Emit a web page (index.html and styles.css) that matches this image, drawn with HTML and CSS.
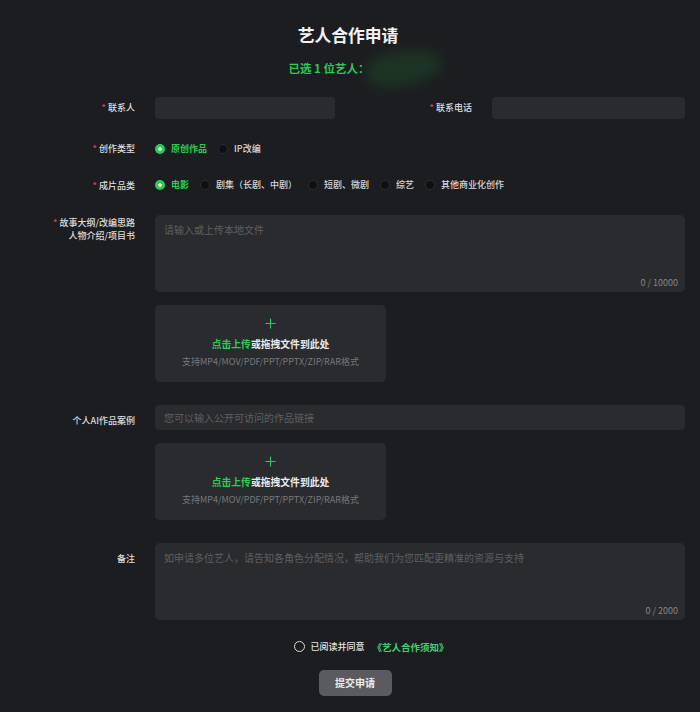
FILE: index.html
```html
<!DOCTYPE html>
<html lang="zh-CN">
<head>
    <meta charset="UTF-8">
    <meta name="viewport" content="width=device-width, initial-scale=1.0">
    <title>艺人合作申请</title>
    <link rel="stylesheet" href="styles.css">
</head>
<body>
    <div class="page">
        <div class="header">
            <h1>艺人合作申请</h1>
            <div class="selected">已选 1 位艺人：<span class="redacted"></span></div>
        </div>

        <div class="form">
            <div class="row row-double">
                <label class="label"><i>*</i> 联系人</label>
                <input class="input" type="text">
                <label class="label"><i>*</i> 联系电话</label>
                <input class="input" type="text">
            </div>

            <div class="row">
                <label class="label"><i>*</i> 创作类型</label>
                <div class="options">
                    <span class="option checked"><span class="radio"></span>原创作品</span>
                    <span class="option"><span class="radio"></span>IP改编</span>
                </div>
            </div>

            <div class="row">
                <label class="label"><i>*</i> 成片品类</label>
                <div class="options">
                    <span class="option checked"><span class="radio"></span>电影</span>
                    <span class="option"><span class="radio"></span>剧集（长剧、中剧）</span>
                    <span class="option"><span class="radio"></span>短剧、微剧</span>
                    <span class="option"><span class="radio"></span>综艺</span>
                    <span class="option"><span class="radio"></span>其他商业化创作</span>
                </div>
            </div>

            <div class="row">
                <label class="label label-top label-multi"><i>*</i> 故事大纲/改编思路<br>人物介绍/项目书</label>
                <div class="stack">
                    <div class="textarea-wrap">
                        <textarea class="textarea" placeholder="请输入或上传本地文件"></textarea>
                        <span class="counter">0 / 10000</span>
                    </div>
                    <div class="upload">
                        <svg class="plus" width="11" height="11" viewBox="0 0 11 11"><path d="M5.5 0.5v10M0.5 5.5h10" stroke="#2bcc55" stroke-width="1.1" fill="none"/></svg>
                        <div class="upload-title"><span class="green">点击上传</span>或拖拽文件到此处</div>
                        <div class="upload-hint">支持MP4/MOV/PDF/PPT/PPTX/ZIP/RAR格式</div>
                    </div>
                </div>
            </div>

            <div class="row">
                <label class="label label-top">个人AI作品案例</label>
                <div class="stack">
                    <input class="input input-tall" type="text" placeholder="您可以输入公开可访问的作品链接">
                    <div class="upload">
                        <svg class="plus" width="11" height="11" viewBox="0 0 11 11"><path d="M5.5 0.5v10M0.5 5.5h10" stroke="#2bcc55" stroke-width="1.1" fill="none"/></svg>
                        <div class="upload-title"><span class="green">点击上传</span>或拖拽文件到此处</div>
                        <div class="upload-hint">支持MP4/MOV/PDF/PPT/PPTX/ZIP/RAR格式</div>
                    </div>
                </div>
            </div>

            <div class="row">
                <label class="label label-top">备注</label>
                <div class="textarea-wrap">
                    <textarea class="textarea" placeholder="如申请多位艺人，请告知各角色分配情况，帮助我们为您匹配更精准的资源与支持"></textarea>
                    <span class="counter">0 / 2000</span>
                </div>
            </div>
        </div>

        <div class="agree">
            <span class="circle"></span>
            <span>已阅读并同意</span>
            <a class="link">《艺人合作须知》</a>
        </div>

        <div class="actions">
            <button class="submit">提交申请</button>
        </div>
    </div>
</body>
</html>
```

FILE: styles.css
```css
:root { --bg: #1c1d20; --field: #2a2b2e; --fg: #d6d6d6; --muted: #5e5f62; --green: #2bcc55; --red: #e0454a; }

* {
    box-sizing: border-box;
    margin: 0;
    padding: 0;
}

body {
    background: var(--bg);
    color: var(--fg);
    font-family: "Noto Sans CJK SC", "Noto Sans", sans-serif;
}

.page {
    padding: 23px 15px 16px 0;
}

.header {
    padding-left: 11px;
}

h1 {
    font-size: 16.8px;
    line-height: 24px;
    font-weight: 700;
    color: #f2f2f2;
    text-align: center;
}

.selected {
    margin-top: 14px;
    font-size: 11.5px;
    line-height: 14px;
    font-weight: 700;
    color: var(--green);
    text-align: center;
    padding-left: 4px;
}

.redacted {
    position: relative;
    display: inline-block;
    width: 42px;
    height: 14px;
    vertical-align: middle;
}

.redacted::after {
    content: "";
    position: absolute;
    left: -4px;
    top: -12px;
    width: 76px;
    height: 34px;
    border-radius: 45% 55% 50% 40%;
    background: rgba(30, 70, 40, 0.55);
    filter: blur(6px);
    transform: rotate(-10deg);
}

.form {
    margin-top: 20px;
    display: flex;
    flex-direction: column;
    gap: 23px;
}

.row {
    display: grid;
    grid-template-columns: 135px 1fr;
    column-gap: 20px;
    align-items: center;
}

.row-double {
    grid-template-columns: 135px 180px 1fr 193px;
}

.label {
    font-size: 9px;
    line-height: 13px;
    font-weight: 500;
    color: #dcdcdc;
    text-align: right;
}

.label i {
    font-style: normal;
    color: var(--red);
}

.label-top {
    align-self: start;
    padding-top: 9px;
}

.label-multi {
    padding-top: 1px;
}

.input {
    width: 100%;
    height: 22px;
    border: none;
    border-radius: 4px;
    background: var(--field);
    outline: none;
    padding: 0 9px;
    font-family: inherit;
    font-size: 10px;
    color: var(--fg);
}

.input-tall {
    height: 25px;
}

.input::placeholder,
.textarea::placeholder {
    color: var(--muted);
}

.options {
    display: flex;
    align-items: center;
    gap: 11px;
    font-size: 9px;
    line-height: 13.5px;
    font-weight: 500;
    color: #d8d8d8;
}

.option {
    display: flex;
    align-items: center;
    gap: 6px;
}

.option.checked {
    color: var(--green);
    font-weight: 700;
}

.radio {
    width: 10px;
    height: 10px;
    border-radius: 50%;
    background: #0f1012;
    border: 1px solid #2c2d31;
}

.option.checked .radio {
    border: none;
    background: radial-gradient(circle, #fff 0 1.4px, var(--green) 2px);
}

.stack {
    display: flex;
    flex-direction: column;
    gap: 13px;
}

.textarea-wrap {
    position: relative;
}

.textarea {
    display: block;
    width: 100%;
    height: 77px;
    border: none;
    border-radius: 5px;
    background: var(--field);
    outline: none;
    resize: none;
    padding: 8px 9px;
    font-family: inherit;
    font-size: 10px;
    line-height: 14px;
    color: var(--fg);
}

.counter {
    position: absolute;
    right: 7px;
    bottom: 3px;
    font-size: 9px;
    line-height: 12px;
    color: #858588;
}

.upload {
    width: 231px;
    height: 77px;
    border-radius: 5px;
    background: var(--field);
    display: flex;
    flex-direction: column;
    align-items: center;
    justify-content: center;
}

.plus {
    display: block;
}

.upload-title {
    margin-top: 8px;
    font-size: 9.8px;
    line-height: 14px;
    font-weight: 700;
    color: #ececec;
}

.green {
    color: var(--green);
}

.upload-hint {
    margin-top: 5px;
    font-size: 9px;
    line-height: 12px;
    color: #77787b;
}

.agree {
    margin-top: 20px;
    display: flex;
    justify-content: center;
    align-items: center;
    gap: 5px;
    font-size: 9px;
    line-height: 14px;
    font-weight: 500;
    color: #e2e2e2;
    padding-left: 58px;
}

.circle {
    width: 11px;
    height: 11px;
    border-radius: 50%;
    border: 1px solid #dcdcdc;
}

.link {
    margin-left: 3px;
    font-size: 9.5px;
    color: #3fd27a;
    font-weight: 700;
}

.actions {
    margin-top: 16px;
    display: flex;
    justify-content: center;
    padding-left: 25px;
}

.submit {
    width: 73px;
    height: 26px;
    border: none;
    border-radius: 5px;
    background: #5a5b5e;
    color: #ececec;
    font-family: inherit;
    font-size: 10px;
    font-weight: 700;
}
```
